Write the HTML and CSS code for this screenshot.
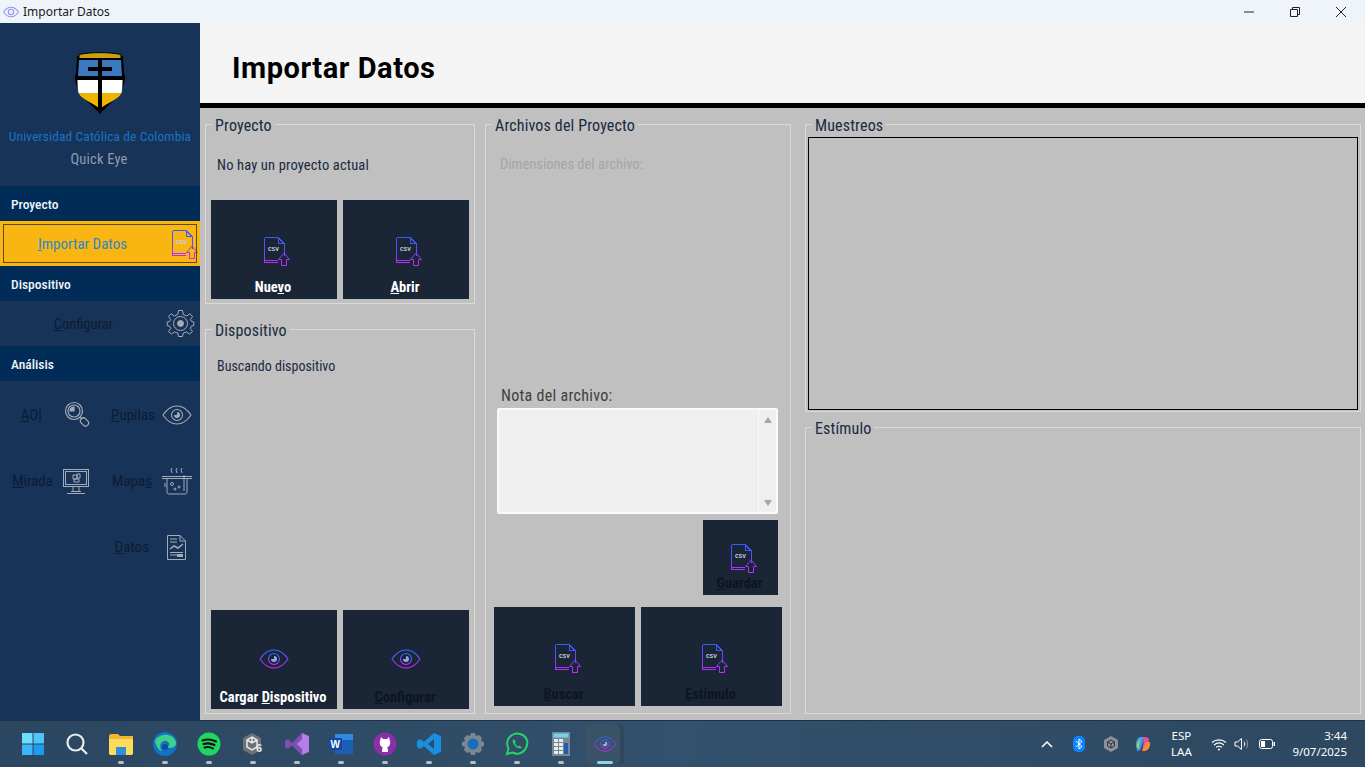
FILE: index.html
```html
<!DOCTYPE html>
<html lang="es">
<head>
<meta charset="utf-8">
<title>Importar Datos</title>
<link rel="stylesheet" href="styles.css">
</head>
<body>
<svg class="defs" width="0" height="0">
  <defs>
    <linearGradient id="grad" x1="0" y1="0" x2="0" y2="1">
      <stop offset="0" stop-color="#2a6cff"/><stop offset="1" stop-color="#d024ff"/>
    </linearGradient>
    <linearGradient id="gradu" gradientUnits="userSpaceOnUse" x1="0" y1="0" x2="0" y2="30">
      <stop offset="0" stop-color="#2a62ff"/><stop offset=".6" stop-color="#7a40f8"/><stop offset="1" stop-color="#d024ff"/>
    </linearGradient>
    <symbol id="csv" viewBox="0 0 28 30">
      <path class="crisp" d="M1.500 1.500H15L21 7.500V20M1.500 1.500V26.500H15M1.500 24.500H15M15 1.500V7.500H21" fill="none" stroke="url(#gradu)" stroke-width="1"/>
      <path d="M21 17L26.500 23.500H23.500V29.500H18.500V23.500H15.500Z" fill="none" stroke="url(#gradu)" stroke-width="1"/>
      <text x="5" y="15" class="csvtext">CSV</text>
    </symbol>
    <symbol id="eye" viewBox="0 0 30 20">
      <path d="M1 10C5 4 10 1 15 1S25 4 29 10C25 16 20 19 15 19S5 16 1 10Z" fill="none" stroke="url(#grad)" stroke-width="1.100"/>
      <circle cx="15" cy="10" r="5.500" fill="none" stroke="url(#grad)" stroke-width="1.100"/>
      <path d="M15 7A3 3 0 1 1 12 10H15Z" fill="#8fa6e8"/>
    </symbol>
  </defs>
</svg>

<header class="titlebar">
  <div class="title-left">
    <svg class="title-eye" width="16" height="12" viewBox="0 0 30 20"><path d="M1 10C5 4 10 1 15 1S25 4 29 10C25 16 20 19 15 19S5 16 1 10Z" fill="none" stroke="#a58cf0" stroke-width="2"/><circle cx="15" cy="10" r="5" fill="none" stroke="#8a9cf0" stroke-width="2"/></svg>
    <span>Importar Datos</span>
  </div>
  <div class="winbtns">
    <svg width="12" height="12" viewBox="0 0 12 12"><path d="M1 6H11" stroke="#222" fill="none"/></svg>
    <svg width="12" height="12" viewBox="0 0 12 12"><path d="M1.500 3.500H8.500V10.500H1.500ZM3.500 3.500V1.500H10.500V8.500H8.500" stroke="#222" fill="none"/></svg>
    <svg width="12" height="12" viewBox="0 0 12 12"><path d="M1 1L11 11M11 1L1 11" stroke="#222" fill="none"/></svg>
  </div>
</header>

<div class="app">
  <aside class="sidebar">
    <div class="brand">
      <svg class="shield" width="52" height="64" viewBox="0 0 52 64">
        <path d="M3 5C14 2 38 2 49 5L50 22L51 25C51 42 38 50 26 63C14 50 1 42 1 25L2 22Z" fill="#000"/>
        <path d="M5 9H47L48 25H4Z" fill="#3a78c0"/>
        <path d="M3.500 29H48.500C48.500 35 48 40 47.500 42H4.500C4 40 3.500 35 3.500 29Z" fill="#fff"/>
        <path d="M4.500 42H47.500C44 49 34 51 26 58C18 51 8 49 4.500 42Z" fill="#f0b400"/>
        <path d="M5 3.500C16 1 36 1 47 3.500V7.500H5Z" fill="#c9a012" stroke="#000" stroke-width="1"/>
        <path d="M4 26H48V29H4ZM24 8H28V60H24ZM14 16H38V20H14Z" fill="#000"/>
      </svg>
      <div class="uni">Universidad Católica de Colombia</div>
      <div class="app-name">Quick Eye</div>
    </div>
    <div class="nav-head">Proyecto</div>
    <div class="nav-item active">
      <span class="nav-label"><u>I</u>mportar Datos</span>
      <svg class="nav-icon" width="28" height="30"><use href="#csv"/></svg>
    </div>
    <div class="nav-head">Dispositivo</div>
    <div class="nav-item">
      <span class="nav-label conf"><u>C</u>onfigurar</span>
      <svg class="gear" width="29" height="29" viewBox="0 0 29 29" fill="none" stroke="#a4acb8">
        <path d="M12.500 1.500H16.500L17.300 5.500L20.800 7L24 4.700L26.500 7.500L24.300 10.700L25.500 12.500L27.800 13V16.500L25.500 17L24.300 19.500L26.500 22.500L23.500 25L20.500 23L17.300 24L16.500 27.500H12.500L11.700 24L8.500 23L5.500 25L2.500 22.500L4.700 19.500L3.500 17L1.200 16.500V13L3.500 12.500L4.700 10.700L2.500 7.500L5 4.700L8.200 7L11.700 5.500Z"/>
        <circle cx="14.500" cy="14.500" r="7"/><circle cx="14.500" cy="14.500" r="3" fill="#a4acb8"/>
      </svg>
    </div>
    <div class="nav-head">Análisis</div>
    <div class="nav-grid">
      <div class="tool t-aoi">
        <span><u>A</u>O<u>I</u></span>
        <svg width="26" height="28" viewBox="0 0 26 28" fill="none" stroke="#a4acb8" stroke-width="1.200"><circle cx="10" cy="10" r="8.500"/><circle cx="10" cy="10" r="6"/><path d="M10 6A4 4 0 0 0 6 10H10Z" fill="#a4acb8"/><path d="M16 16L18 18"/><rect x="16" y="18" width="9" height="6" rx="3" transform="rotate(45 20.500 21)"/></svg>
      </div>
      <div class="tool t-pup">
        <span><u>P</u>upilas</span>
        <svg width="30" height="20" viewBox="0 0 30 20" fill="none" stroke="#a4acb8" stroke-width="1.100"><path d="M1 10C5 4 10 1 15 1S25 4 29 10C25 16 20 19 15 19S5 16 1 10Z"/><circle cx="15" cy="10" r="5.500"/><path d="M15 7A3 3 0 1 1 12 10H15Z" fill="#a4acb8" stroke="none"/></svg>
      </div>
      <div class="tool t-mir">
        <span><u>M</u>irada</span>
        <svg width="28" height="27" viewBox="0 0 28 27" fill="none" stroke="#a4acb8"><rect x="1.500" y="1.500" width="25" height="17"/><rect x="3.500" y="3.500" width="21" height="13"/><path d="M11 19V23M17 19V23M5 25.500H23M9 23.500H19"/><path d="M11 7H15V11H11ZM15 6H18V10H15ZM12 11H17V14H12Z"/></svg>
      </div>
      <div class="tool t-map">
        <span>Mapa<u>s</u></span>
        <svg width="32" height="28" viewBox="0 0 32 28" fill="none" stroke="#a4acb8"><path d="M1 9.500H31M1 11.500H31M6 11.500V25C6 26.500 7 27 8 27H24C25 27 26 26.500 26 25V11.500"/><path d="M11 1L10 3L11 6M16 1L15 3L16 6M21 1L20 3L21 6"/><circle cx="11" cy="17" r="1.500"/><circle cx="18" cy="20" r="1"/><circle cx="14" cy="22" r="1"/><path d="M23 8V24"/><path d="M4 16V20"/></svg>
      </div>
      <div class="tool t-dat">
        <span><u>D</u>atos</span>
        <svg width="21" height="27" viewBox="0 0 21 27" fill="none" stroke="#a4acb8"><path d="M1.500 1.500H14L19.500 7V25.500H1.500ZM14 1.500V7H19.500M4 5H11M4 8H11"/><path d="M4 15L8 12L12 14L17 10" stroke-width="1.500"/><path d="M4 18.500H17M4 21H11"/><rect x="11" y="20" width="6" height="3" fill="#a4acb8" stroke="none"/></svg>
      </div>
    </div>
  </aside>

  <main class="content">
    <div class="page-head"><h1>Importar Datos</h1></div>
    <div class="panels">
      <div class="col-left">
        <fieldset class="group g-proj">
          <legend>Proyecto</legend>
          <p class="info">No hay un proyecto actual</p>
          <div class="btnrow">
            <button class="tile light"><svg width="28" height="30"><use href="#csv"/></svg><span>Nue<u>v</u>o</span></button>
            <button class="tile light"><svg width="28" height="30"><use href="#csv"/></svg><span><u>A</u>brir</span></button>
          </div>
        </fieldset>
        <fieldset class="group g-disp">
          <legend>Dispositivo</legend>
          <p class="info">Buscando dispositivo</p>
          <div class="btnrow">
            <button class="tile light"><svg class="e" width="30" height="20"><use href="#eye"/></svg><span>Cargar <u>D</u>ispositivo</span></button>
            <button class="tile"><svg class="e" width="30" height="20"><use href="#eye"/></svg><span><u>C</u>onfigurar</span></button>
          </div>
        </fieldset>
      </div>

      <fieldset class="group g-files">
        <legend>Archivos del Proyecto</legend>
        <p class="dim">Dimensiones del archivo:</p>
        <div class="note-label">Nota del archivo:</div>
        <div class="note">
          <div class="note-text"></div>
          <div class="scroll"><i class="up"></i><i class="down"></i></div>
        </div>
        <button class="tile save"><svg width="28" height="30"><use href="#csv"/></svg><span><u>G</u>uardar</span></button>
        <div class="btnrow wide">
          <button class="tile"><svg width="28" height="30"><use href="#csv"/></svg><span><u>B</u>uscar</span></button>
          <button class="tile"><svg width="28" height="30"><use href="#csv"/></svg><span><u>E</u>stímulo</span></button>
        </div>
      </fieldset>

      <div class="col-right">
        <fieldset class="group g-samples">
          <legend>Muestreos</legend>
          <div class="frame"></div>
        </fieldset>
        <fieldset class="group g-stim">
          <legend>Estímulo</legend>
        </fieldset>
      </div>
    </div>
  </main>
</div>

<footer class="taskbar">
  <div class="apps">
    <div class="app-ico"><svg width="24" height="24" viewBox="0 0 24 24"><path d="M1 1H11.500V11.500H1Z" fill="#6fdcfb"/><path d="M12.500 1H23V11.500H12.500Z" fill="#4fc4f8"/><path d="M1 12.500H11.500V23H1Z" fill="#3bb6f6"/><path d="M12.500 12.500H23V23H12.500Z" fill="#1a9cf2"/></svg></div>
    <div class="app-ico"><svg width="24" height="24" viewBox="0 0 24 24" fill="none" stroke="#e8edf2" stroke-width="2.200"><circle cx="10.500" cy="10.500" r="8"/><path d="M16.500 16.500L22 22"/></svg></div>
    <div class="app-ico dot"><svg width="26" height="24" viewBox="0 0 26 24"><path d="M1 4C1 3 2 2 3 2H10L12 4H25V21C25 22 24 23 23 23H3C2 23 1 22 1 21Z" fill="#f2b52c"/><path d="M1 7H25V21C25 22 24 23 23 23H3C2 23 1 22 1 21Z" fill="#fcdc5c"/><path d="M8 15H18V23H8Z" fill="#2f8fd8"/></svg></div>
    <div class="app-ico dot"><svg width="24" height="24" viewBox="0 0 24 24"><circle cx="12" cy="12" r="12" fill="#1272c4"/><path d="M2 9C5 1 20 0 23 10C24 16 16 17 14 15C19 13 15 8 11 9C7 10 6 15 9 19C5 18 3 14 2 9Z" fill="#3fd08a"/><circle cx="12" cy="15" r="3" fill="#0d4c9a"/></svg></div>
    <div class="app-ico dot"><svg width="24" height="24" viewBox="0 0 24 24" fill="none"><circle cx="12" cy="12" r="11.500" fill="#1ed760"/><path d="M5.500 8.500C10 7 15 7.500 19 9.500M6.500 12C10 11 14.500 11.500 17.500 13M7.500 15.500C10.500 14.500 13.500 15 16 16.500" stroke="#111" stroke-width="2" stroke-linecap="round"/></svg></div>
    <div class="app-ico dot"><svg width="22" height="24" viewBox="0 0 22 24"><path d="M10 1L19 6V18L10 23L1 18V6Z" fill="#6c7278"/><path d="M10 5L15 8V15L10 18L5 15V8ZM10 5V11M5 8L10 11L15 8" fill="none" stroke="#e4e6e8" stroke-width="1.500"/><text class="six" x="14" y="20">6</text></svg></div>
    <div class="app-ico dot"><svg width="24" height="24" viewBox="0 0 24 24"><path d="M17 1L24 4V20L17 23L7 13Z" fill="#b57de6"/><path d="M7 13L3 17L0 15V9L3 7L7 11L17 1V7L12 12L17 17V23Z" fill="#7d4fb5"/></svg></div>
    <div class="app-ico dot"><svg width="26" height="24" viewBox="0 0 26 24"><path d="M7 2H25V22H7Z" fill="#1a5fb4"/><path d="M7 2H25V8H7Z" fill="#2f8be0"/><rect x="1" y="6" width="13" height="12" fill="#1448a0"/><text class="wtext" x="2.500" y="16">W</text></svg></div>
    <div class="app-ico dot"><svg width="24" height="24" viewBox="0 0 24 24"><circle cx="12" cy="12" r="11.500" fill="#8a2fa8"/><path d="M8 5L10 7H14L16 5L17 9C18 12 16 15 14 15.500C15 16.500 15 18 15 20H9C9 18 9 16.500 10 15.500C8 15 6 12 7 9Z" fill="#fff"/></svg></div>
    <div class="app-ico dot"><svg width="24" height="24" viewBox="0 0 24 24"><path d="M17 1L24 4V20L17 23L7 14L3 17L0 15V9L3 7L7 10ZM17 7L11 12L17 17Z" fill="#1a8fe0"/></svg></div>
    <div class="app-ico dot"><svg width="24" height="24" viewBox="0 0 24 24"><path d="M10 1H14L15 4L18 3L21 6L20 9L23 10V14L20 15L21 18L18 21L15 20L14 23H10L9 20L6 21L3 18L4 15L1 14V10L4 9L3 6L6 3L9 4Z" fill="#7c8690"/><circle cx="12" cy="12" r="5.500" fill="#1a6cc0"/></svg></div>
    <div class="app-ico dot"><svg width="24" height="24" viewBox="0 0 24 24" fill="none"><path d="M2 22L3.500 16.500C1 12 2 6 7 3C12 0 19 2 21.500 7C24 13 20 20 14 21.500C11.500 22 9.500 21.500 7.500 20.500Z" stroke="#25d366" stroke-width="2"/><path d="M8 7C7 9 8 12 10.500 14.500C13 16.500 15.500 17 17 15.500L14.500 13.500L13 14.500C11.500 13.500 10.500 12.500 10 11L11 9.500Z" fill="#25d366"/></svg></div>
    <div class="app-ico dot"><svg width="18" height="24" viewBox="0 0 18 24"><rect width="18" height="24" fill="#7c8690"/><rect x="1.500" y="1.500" width="15" height="4" fill="#6fd4f4"/><path d="M2 7H6V10H2ZM7 7H11V10H7ZM2 11H6V14H2ZM7 11H11V14H7ZM2 15H6V18H2ZM7 15H11V18H7ZM2 19H6V22H2ZM7 19H11V22H7Z" fill="#e8ecf0"/><rect x="12" y="11" width="4" height="11" fill="#1a5fb4"/></svg></div>
    <div class="app-ico current"><svg width="24" height="16"><use href="#eye"/></svg></div>
  </div>
  <div class="tray">
    <svg class="t-chev" width="12" height="7" viewBox="0 0 12 7" fill="none" stroke="#fff" stroke-width="1.500"><path d="M1 6L6 1L11 6"/></svg>
    <svg class="t-bt" width="12" height="16" viewBox="0 0 12 16"><rect width="12" height="16" rx="5" fill="#0a84ff"/><path d="M3 5L9 10.500L6 13V3L9 5.500L3 11" fill="none" stroke="#fff"/></svg>
    <svg class="t-cube" width="16" height="16" viewBox="0 0 16 16"><path d="M8 0L15 4V12L8 16L1 12V4Z" fill="#8a929a"/><path d="M8 4L11.500 6V10L8 12L4.500 10V6ZM8 8V12M4.500 6L8 8L11.500 6" fill="none" stroke="#333"/></svg>
    <svg class="t-cop" width="16" height="16" viewBox="0 0 16 16"><path d="M5 1H9L6 12C5.500 14 4 15 2 15L1 8C1 5 3 1 5 1Z" fill="#3aa0e8"/><path d="M5 3C3 5 2 8 1.500 11L3.500 13Z" fill="#a8d848"/><path d="M8 1C11 1 14 1 14 4L10 15H7C8 11 9 5 8 1Z" fill="#e84ea0"/><path d="M11 6H15C15.500 10 14 14 10 15H7Z" fill="#f58a3a"/></svg>
    <div class="t-lang"><span>ESP</span><span>LAA</span></div>
    <svg class="t-wifi" width="16" height="13" viewBox="0 0 16 13" fill="none" stroke="#fff" stroke-width="1.100"><path d="M1 4.500C5 1 11 1 15 4.500M3 7C6 4.500 10 4.500 13 7M5 9.300C6.800 8 9.200 8 11 9.300"/><circle cx="8" cy="11.500" r="1" fill="#fff" stroke="none"/></svg>
    <svg class="t-vol" width="16" height="14" viewBox="0 0 16 14" fill="none" stroke="#fff"><path d="M1 5H3.500L7.500 1.500V12.500L3.500 9H1Z"/><path d="M10 4.500C11 6 11 8 10 9.500"/><path d="M12.500 2.500C14 5 14 9 12.500 11.500" stroke="#8a96a4"/></svg>
    <svg class="t-bat" width="16" height="10" viewBox="0 0 16 10"><rect x=".5" y=".5" width="13" height="9" rx="2" fill="none" stroke="#fff"/><rect x="2" y="2" width="4" height="6" fill="#fff"/><rect x="14.500" y="3" width="1.500" height="4" fill="#fff"/></svg>
    <div class="t-clock"><span>3:44</span><span>9/07/2025</span></div>
  </div>
</footer>
</body>
</html>
```

FILE: styles.css
```css
* { box-sizing: border-box; }
html, body { margin: 0; padding: 0; }
body {
  width: 1365px;
  height: 767px;
  overflow: hidden;
  display: flex;
  flex-direction: column;
  font-family: "Roboto", sans-serif;
  font-stretch: 75%;
  font-weight: 450;
  background: #c0c0c0;
}
.defs { position: absolute; }
.crisp { shape-rendering: crispEdges; }
.csvtext { font: 700 6px "Liberation Mono", monospace; fill: #c4cce8; }
.six { font: 700 11px "Liberation Sans", sans-serif; fill: #e4e6e8; }
.wtext { font: 700 10px "Liberation Sans", sans-serif; fill: #fff; }

.titlebar {
  height: 23px;
  flex: none;
  background: #eff4fa;
  display: flex;
  justify-content: space-between;
  align-items: center;
  font: 12px "Noto Sans", sans-serif;
  color: #1a1a1a;
}
.title-left { display: flex; align-items: center; gap: 4px; padding-left: 3px; }
.winbtns { display: flex; gap: 34px; padding-right: 18px; }

.app { flex: 1; display: flex; min-height: 0; }
.sidebar { width: 200px; flex: none; background: #173358; display: flex; flex-direction: column; }
.brand { height: 163px; display: flex; flex-direction: column; align-items: center; padding-top: 28px; }
.shield { display: block; margin-bottom: 12px; }
.uni { font-size: 13.500px; color: #1a72c8; white-space: nowrap; line-height: 18px; letter-spacing: .1px; }
.app-name { font-size: 14.500px; color: #8f9bad; margin-top: 6px; line-height: 18px; letter-spacing: .2px; margin-left: -2px; }
.nav-head { height: 35px; background: #002c57; color: #eef4fa; font-size: 13.500px; font-weight: 500; padding: 1px 0 0 11px; display: flex; align-items: center; }
.nav-item { height: 45px; display: flex; align-items: center; justify-content: flex-end; position: relative; padding-right: 5px; }
.nav-item.active { background: #f9b612; border: 1px solid #f9b612; outline: 1px solid #5c4a14; outline-offset: -4px; padding-right: 0; }
.nav-label { font-size: 15px; color: #2d86c8; margin-right: 44px; padding-top: 1px; }
.conf { color: #0c1c34; font-size: 14.500px; margin-right: 53px; }
.nav-grid { flex: 1; display: grid; grid-template-columns: 100px 100px; grid-auto-rows: 66px; align-content: start; padding-top: 1px; }
.tool { display: flex; justify-content: flex-end; align-items: center; color: #0c1c34; font-size: 15px; }
.t-aoi { padding-right: 10px; gap: 22px; }
.t-pup { padding-right: 8px; gap: 7px; }
.t-mir { padding-right: 10px; gap: 9px; }
.t-map { padding-right: 7px; gap: 9px; }
.t-dat { grid-column: 2; padding-right: 13px; gap: 17px; }

.content { flex: 1; display: flex; flex-direction: column; min-width: 0; }
.page-head { height: 85px; flex: none; background: #f4f4f4; border-bottom: 5px solid #000; padding: 28px 0 0 32px; }
.page-head h1 { margin: 0; font: 700 29px/34px "Roboto", sans-serif; color: #000; letter-spacing: .55px; }
.panels { flex: 1; display: grid; grid-template-columns: 270px 306px 1fr; column-gap: 10px; padding: 5px 4px 6px 5px; min-height: 0; }
.col-left, .col-right { display: flex; flex-direction: column; }
.col-right { margin-left: 4px; }
.group { margin: 0; min-width: 0; border: 1px solid #dadada; padding: 0 5px; display: flex; flex-direction: column; }
.group legend { padding: 4px 3px 0; margin-left: 1px; font-size: 16px; line-height: 18px; color: #1a2a40; letter-spacing: .15px; }
.g-proj { height: 191px; padding-bottom: 4px; }
.g-proj .btnrow { margin-top: 25px; }
.g-disp { flex: 1; margin-top: 14px; padding-bottom: 4px; }
.info { margin: 0; font-size: 14.500px; color: #1a2a40; line-height: 18px; padding-left: 6px; letter-spacing: .15px; }
.g-proj .info { padding-top: 22px; }
.g-disp .info { padding-top: 17px; font-size: 14px; letter-spacing: 0; }
.btnrow { display: flex; gap: 6px; margin-top: auto; }
.tile { flex: 1; border: 0; padding: 0; background: #1a2636; height: 99px; display: flex; flex-direction: column; align-items: center; font: 700 14.500px "Roboto", sans-serif; font-stretch: 75%; color: #0c1520; position: relative; }
.tile svg { margin: 36px 0 0 6px; }
.tile svg.e { margin: 39px 0 0; }
.tile span { position: absolute; left: 0; right: 2px; bottom: 2px; line-height: 18px; text-align: center; white-space: nowrap; }
.tile.light { color: #fff; }

.g-files { padding: 0 8px; }
.g-files legend { margin-left: -2px; }
.dim { margin: 0; padding: 21px 0 0 6px; font-size: 14.500px; color: #a5a5a5; line-height: 18px; height: 40px; }
.note-label { margin-top: 212px; padding-left: 7px; font-size: 16px; color: #3f3f3f; line-height: 18px; letter-spacing: .3px; }
.note { margin: 3px 4px 0 3px; height: 106px; border: 2px solid #fafafa; border-radius: 2px; background: #efefef; display: flex; flex: none; }
.note-text { flex: 1; border-right: 1px solid #fafafa; }
.scroll { width: 17px; display: flex; flex-direction: column; justify-content: space-between; align-items: center; padding: 7px 0 6px; }
.scroll i { display: block; width: 0; height: 0; border-left: 4px solid transparent; border-right: 4px solid transparent; }
.scroll .up { border-bottom: 6px solid #a5a5a5; }
.scroll .down { border-top: 6px solid #a5a5a5; }
.tile.save { flex: none; width: 75px; height: 75px; margin: 6px 4px 0 auto; }
.tile.save svg { margin: 23px 0 0 7px; }
.tile.save span { bottom: 2px; }
.wide { margin: auto 0 7px; }
.wide svg { margin-left: 7px; }

.g-samples { height: 299px; padding: 0 2px; }
.g-samples legend { margin-left: 4px; }
.frame { height: 273px; margin-top: 2px; border: 1px solid #000; }
.g-stim { flex: 1; margin-top: 4px; }

.taskbar { height: 47px; flex: none; background: linear-gradient(90deg, #2a4660, #33506c 50%, #2d4860); border-top: 1px solid #1f3346; display: flex; justify-content: space-between; align-items: center; }
.apps { display: flex; align-items: center; padding-left: 11px; }
.app-ico { width: 44px; height: 46px; display: flex; align-items: center; justify-content: center; position: relative; }
.app-ico.dot::after { content: ""; position: absolute; bottom: 3px; left: 19px; width: 6px; height: 3px; border-radius: 2px; background: #b6bec6; }
.app-ico.current { width: 35px; margin-left: 2px; height: 39px; padding-left: 5px; background: #3a5268; border-radius: 4px; box-shadow: 4px 0 0 #2f475d; }
.app-ico.current::after { content: ""; position: absolute; bottom: 0; left: 12px; width: 16px; height: 3px; border-radius: 2px; background: #8fd4ea; }
.tray { display: flex; align-items: center; color: #fff; font: 11.500px "Noto Sans", sans-serif; padding-right: 18px; }
.t-chev { margin-right: 20px; }
.t-bt { margin-right: 18px; }
.t-cube { margin-right: 16px; }
.t-lang { display: flex; flex-direction: column; align-items: center; line-height: 16px; width: 44px; margin: 0 8px; }
.t-wifi { margin-right: 7px; }
.t-vol { margin-right: 9px; }
.t-clock { display: flex; flex-direction: column; align-items: flex-end; line-height: 16px; margin-left: 17px; }
```
